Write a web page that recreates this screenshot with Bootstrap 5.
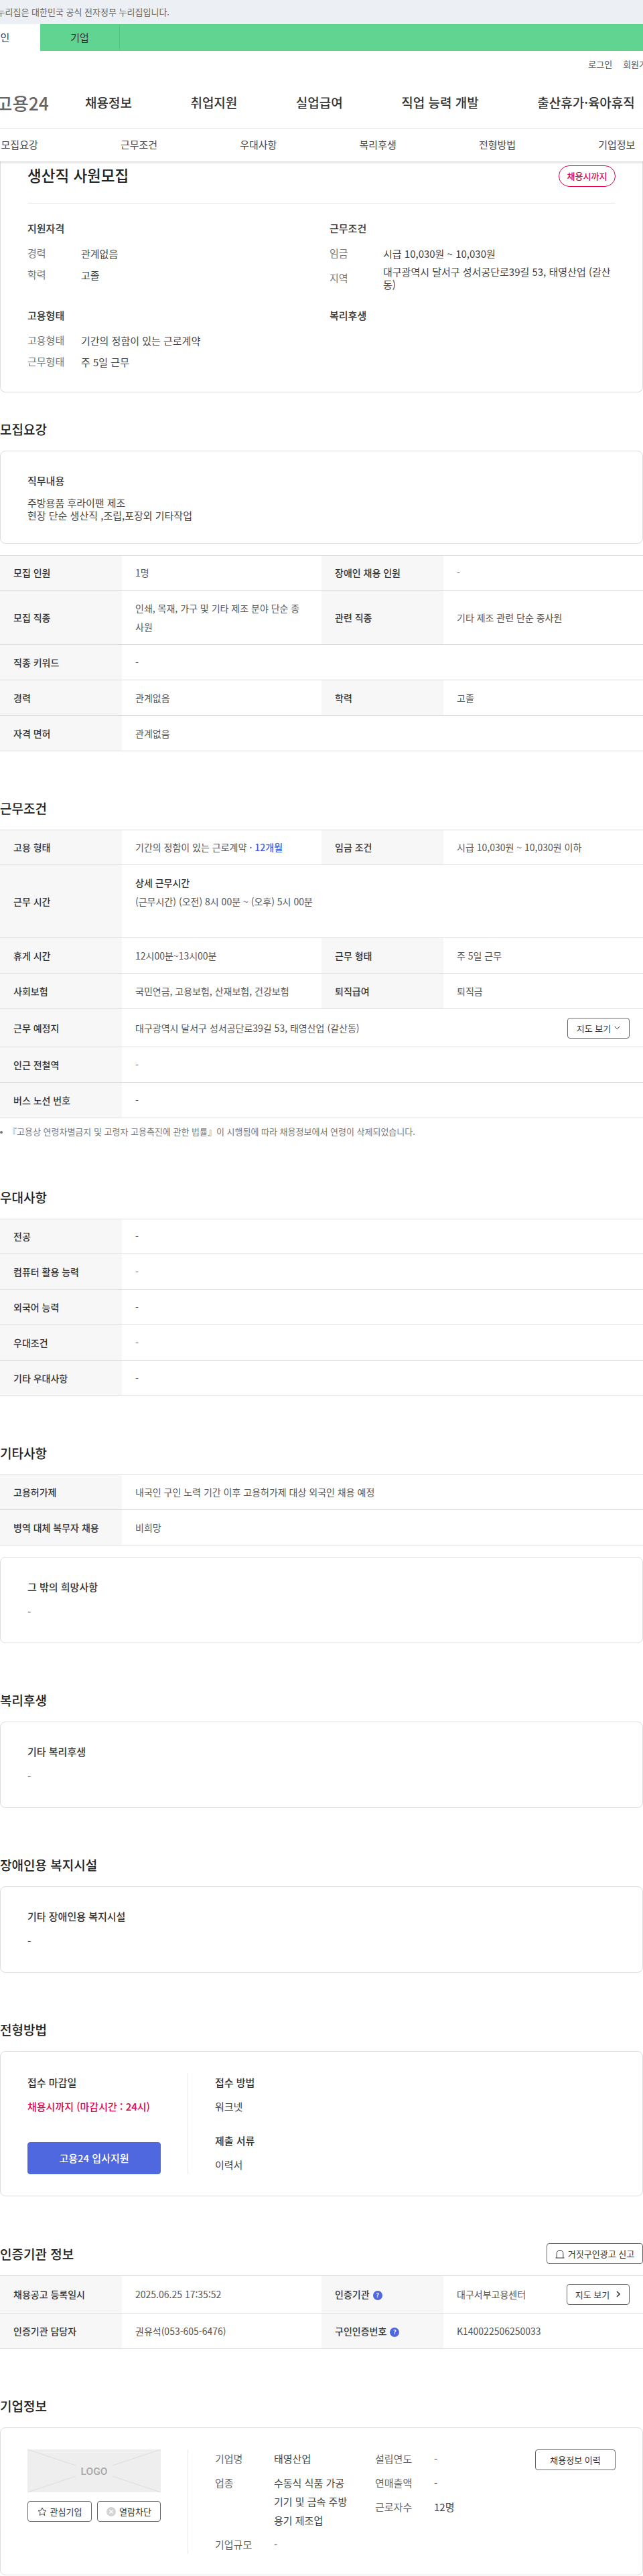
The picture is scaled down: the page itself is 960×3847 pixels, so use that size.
<!DOCTYPE html>
<html lang="ko">
<head>
<meta charset="utf-8">
<title>생산직 사원모집</title>
<link rel="stylesheet" href="https://cdn.jsdelivr.net/npm/bootstrap@5.3.0/dist/css/bootstrap.min.css">
<style>
body{font-family:"Noto Sans CJK KR","Noto Sans",sans-serif;font-size:15px;color:#444;background:#fff;overflow-x:hidden;margin:0}
.gov-strip{height:36px;background:#eceff4;font-size:13px;line-height:36px;color:#666;white-space:nowrap;overflow:hidden}
.gov-strip span{display:block;margin-left:-20px}
.role-strip{height:40px;background:#62d491;font-size:15px;line-height:40px;color:#333;overflow:hidden}
.role-item{width:119px;flex:none;text-align:center}
.role-item.on{background:#fff;margin-left:-59px}
.role-item.off{border-right:1px solid #57c785}
.util-links{height:40px;font-size:13px;color:#555;margin-right:-18px;gap:16px;white-space:nowrap}
.main-menu{height:76px;border-bottom:1px solid #e8e8e8;white-space:nowrap;overflow:hidden}
.brand-word{font-size:26.5px;font-weight:500;color:#666;margin-left:-6px;margin-right:54px}
.menu-word{font-size:19px;font-weight:500;color:#333;margin-right:87.5px}
.section-tabs{height:49px;position:relative;z-index:2;background:#fff;box-shadow:0 2px 3px rgba(0,0,0,.14);overflow:hidden}
.section-tabs-in{margin-left:-60px;width:1070px;height:48px}
.section-tabs-in span{flex:1 1 0;text-align:center;font-size:15px;color:#444}
.panel-box{--bs-card-border-color:#ddd;--bs-card-border-radius:8px;--bs-card-inner-border-radius:8px;--bs-card-spacer-x:40px;--bs-card-spacer-y:32px;--bs-card-color:#444}
.panel-top{border-top:0;border-top-left-radius:0;border-top-right-radius:0}
.panel-top .card-body{padding-top:6px;padding-bottom:31px}
.job-title{font-size:22.5px;font-weight:500;line-height:32px;color:#222;margin:-2px 0 0}
.deadline-pill{width:85px;height:32px;border:1px solid #e6004d;border-radius:16px;color:#e6004d;font-size:13px;font-weight:500}
.title-row{padding-bottom:24px;border-bottom:1px solid #e8e8e8;margin-bottom:25px}
.group-name{font-size:15px;font-weight:500;line-height:24px;color:#333;margin:0 0 11px}
.pair-row{display:flex;min-height:28px;align-items:center}
.pair-row dt{width:80px;flex:none;font-weight:400;color:#777}
.pair-row dd{margin:0;line-height:19px;flex:1;min-width:0}
.summary-list{margin:0;display:flex;flex-direction:column;gap:4px}
.group-gap{margin-top:25px}
.doc-section{margin-top:70px}
.doc-section.first-sec{margin-top:40px}
.sec-head{font-size:19px;font-weight:500;line-height:30px;color:#222;margin:0 0 17px}
.job-table{table-layout:fixed;margin:0;border-top:1px solid #ddd;--bs-table-border-color:#ddd;--bs-table-color:#555}
.job-table>tbody>tr>th,.job-table>tbody>tr>td{padding:12px 20px;font-size:14px;line-height:28px;vertical-align:middle;border-color:#ddd;color:#555}
.job-table>tbody>tr:first-child>th,.job-table>tbody>tr:first-child>td{padding-top:11px}
.job-table>tbody>tr>th{background:#f7f7f7;--bs-table-bg:#f7f7f7;font-weight:500;color:#333}
.col-head{width:182px}
.col-val{width:298px}
.strong-line{font-weight:500;color:#333}
.term-blue{color:#3f5fe0;font-weight:500}
.map-cell{min-height:32px}
.line-btn{--bs-btn-padding-x:0;--bs-btn-padding-y:0;--bs-btn-font-size:13px;--bs-btn-border-color:#666;--bs-btn-border-radius:4px;--bs-btn-color:#333;--bs-btn-line-height:1;height:31px;display:inline-flex;align-items:center;justify-content:center;gap:5px;white-space:nowrap;flex:none}
.btn-map{width:93px}
.btn-map.wide-gap{width:94px;gap:9px}
.btn-report{width:144px}
.btn-half{width:96px}
.btn-half.narrow{width:95px}
.btn-history{width:120px}
.age-note{font-size:13px;line-height:20px;color:#777;margin:10px 0 0;padding:0 0 3px 12px;position:relative;white-space:nowrap}
.age-note::before{content:"";position:absolute;left:0;top:9px;width:4px;height:4px;border-radius:50%;background:#777}
.gap-panel{margin-top:17px}
.panel-head{font-size:15px;font-weight:500;line-height:24px;color:#333;margin:0 0 11px}
.panel-text{line-height:19px;margin:0}
.panel-dash{line-height:28px;margin:0}
.split-left{width:199px;flex:none}
.split-right{margin-left:40px;padding-left:40px;border-left:1px solid #e8e8e8;flex:1 1 0;min-width:0}
.line-28{line-height:28px;margin:0}
.gap-8{margin-top:8px}
.gap-23{margin-top:23px}
.deadline-text{color:#e6004d;font-weight:500}
.apply-btn{--bs-btn-bg:#4f68e0;--bs-btn-border-color:#4f68e0;--bs-btn-color:#fff;--bs-btn-font-size:15px;--bs-btn-font-weight:500;--bs-btn-border-radius:4px;height:48px;display:flex;align-items:center;justify-content:center;width:100%;margin-top:auto}
.help-dot{width:14px;height:14px;border-radius:50%;background:#4f68e0;color:#fff;font-size:9px;font-weight:700;line-height:14px;text-align:center;display:inline-block;vertical-align:1px;margin-left:5px}
.logo-box{display:block;width:199px;height:64px}
.logo-word{font:500 15.5px Roboto,sans-serif;fill:#a8a8a8}
.btn-pair{margin-top:13px}
.corp-body{padding-bottom:31px}
.corp-pair{display:flex;line-height:28px}
.corp-pair dt{width:88px;flex:none;font-weight:400;color:#666}
.corp-pair dd{margin:0;width:122px;color:#444}
.corp-col{width:239px;flex:none}
.corp-col2{width:170px;flex:none}
.corp-pair+.corp-pair{margin-top:8px}
.corp-info{margin:0}
</style>
</head>
<body>
<div class="gov-strip"><span>이 누리집은 대한민국 공식 전자정부 누리집입니다.</span></div>
<div class="role-strip d-flex">
  <div class="role-item on">개인</div>
  <div class="role-item off">기업</div>
</div>
<header>
  <div class="util-links d-flex justify-content-end align-items-center"><span>로그인</span><span>회원가입</span></div>
  <nav class="main-menu d-flex align-items-center">
    <span class="brand-word">고용24</span>
    <span class="menu-word">채용정보</span>
    <span class="menu-word">취업지원</span>
    <span class="menu-word">실업급여</span>
    <span class="menu-word">직업 능력 개발</span>
    <span class="menu-word">출산휴가·육아휴직</span>
  </nav>
  <div class="section-tabs">
    <div class="section-tabs-in d-flex align-items-center">
      <span>모집요강</span><span>근무조건</span><span>우대사항</span><span>복리후생</span><span>전형방법</span><span>기업정보</span>
    </div>
  </div>
</header>
<main>
  <div class="card panel-box panel-top">
    <div class="card-body">
      <div class="title-row d-flex justify-content-between align-items-start">
        <h1 class="job-title">생산직 사원모집</h1>
        <span class="deadline-pill d-inline-flex align-items-center justify-content-center">채용시까지</span>
      </div>
      <div class="row gx-4">
        <div class="col-6">
          <h3 class="group-name">지원자격</h3>
          <dl class="summary-list">
            <div class="pair-row"><dt>경력</dt><dd>관계없음</dd></div>
            <div class="pair-row"><dt>학력</dt><dd>고졸</dd></div>
          </dl>
        </div>
        <div class="col-6">
          <h3 class="group-name">근무조건</h3>
          <dl class="summary-list">
            <div class="pair-row"><dt>임금</dt><dd>시급 10,030원 ~ 10,030원</dd></div>
            <div class="pair-row"><dt>지역</dt><dd>대구광역시 달서구 성서공단로39길 53, 태영산업 (갈산동)</dd></div>
          </dl>
        </div>
      </div>
      <div class="row gx-4 group-gap">
        <div class="col-6">
          <h3 class="group-name">고용형태</h3>
          <dl class="summary-list">
            <div class="pair-row"><dt>고용형태</dt><dd>기간의 정함이 있는 근로계약</dd></div>
            <div class="pair-row"><dt>근무형태</dt><dd>주 5일 근무</dd></div>
          </dl>
        </div>
        <div class="col-6">
          <h3 class="group-name">복리후생</h3>
        </div>
      </div>
    </div>
  </div>

  <section class="doc-section first-sec">
    <h2 class="sec-head">모집요강</h2>
    <div class="card panel-box">
      <div class="card-body">
        <h3 class="panel-head">직무내용</h3>
        <p class="panel-text">주방용품 후라이팬 제조<br>현장 단순 생산직 ,조립,포장외 기타작업</p>
      </div>
    </div>
    <div class="gap-panel">
      <table class="table job-table">
        <colgroup><col class="col-head"><col class="col-val"><col class="col-head"><col class="col-val"></colgroup>
        <tbody>
          <tr><th>모집 인원</th><td>1명</td><th>장애인 채용 인원</th><td>-</td></tr>
          <tr><th>모집 직종</th><td>인쇄, 목재, 가구 및 기타 제조 분야 단순 종사원</td><th>관련 직종</th><td>기타 제조 관련 단순 종사원</td></tr>
          <tr><th>직종 키워드</th><td colspan="3">-</td></tr>
          <tr><th>경력</th><td>관계없음</td><th>학력</th><td>고졸</td></tr>
          <tr><th>자격 면허</th><td colspan="3">관계없음</td></tr>
        </tbody>
      </table>
    </div>
  </section>

  <section class="doc-section">
    <h2 class="sec-head">근무조건</h2>
    <table class="table job-table">
      <colgroup><col class="col-head"><col class="col-val"><col class="col-head"><col class="col-val"></colgroup>
      <tbody>
        <tr><th>고용 형태</th><td>기간의 정함이 있는 근로계약 <span class="term-blue">· 12개월</span></td><th>임금 조건</th><td>시급 10,030원 ~ 10,030원 이하</td></tr>
        <tr><th>근무 시간</th><td colspan="3"><div class="strong-line">상세 근무시간</div><div>(근무시간) (오전) 8시 00분 ~ (오후) 5시 00분</div><div>&nbsp;</div></td></tr>
        <tr><th>휴게 시간</th><td>12시00분~13시00분</td><th>근무 형태</th><td>주 5일 근무</td></tr>
        <tr><th>사회보험</th><td>국민연금, 고용보험, 산재보험, 건강보험</td><th>퇴직급여</th><td>퇴직금</td></tr>
        <tr><th>근무 예정지</th><td colspan="3"><div class="map-cell d-flex justify-content-between align-items-center"><span>대구광역시 달서구 성서공단로39길 53, 태영산업 (갈산동)</span><button type="button" class="btn line-btn btn-map">지도 보기<svg width="9" height="6" viewBox="0 0 9 6" fill="none" stroke="#333" stroke-width="1"><path d="M.7.8 4.5 4.8 8.3.8"/></svg></button></div></td></tr>
        <tr><th>인근 전철역</th><td colspan="3">-</td></tr>
        <tr><th>버스 노선 번호</th><td colspan="3">-</td></tr>
      </tbody>
    </table>
    <p class="age-note">『고용상 연령차별금지 및 고령자 고용촉진에 관한 법률』이 시행됨에 따라 채용정보에서 연령이 삭제되었습니다.</p>
  </section>

  <section class="doc-section">
    <h2 class="sec-head">우대사항</h2>
    <table class="table job-table">
      <colgroup><col class="col-head"><col class="col-val"><col class="col-head"><col class="col-val"></colgroup>
      <tbody>
        <tr><th>전공</th><td colspan="3">-</td></tr>
        <tr><th>컴퓨터 활용 능력</th><td colspan="3">-</td></tr>
        <tr><th>외국어 능력</th><td colspan="3">-</td></tr>
        <tr><th>우대조건</th><td colspan="3">-</td></tr>
        <tr><th>기타 우대사항</th><td colspan="3">-</td></tr>
      </tbody>
    </table>
  </section>

  <section class="doc-section">
    <h2 class="sec-head">기타사항</h2>
    <table class="table job-table">
      <colgroup><col class="col-head"><col class="col-val"><col class="col-head"><col class="col-val"></colgroup>
      <tbody>
        <tr><th>고용허가제</th><td colspan="3">내국인 구인 노력 기간 이후 고용허가제 대상 외국인 채용 예정</td></tr>
        <tr><th>병역 대체 복무자 채용</th><td colspan="3">비희망</td></tr>
      </tbody>
    </table>
    <div class="card panel-box gap-panel">
      <div class="card-body">
        <h3 class="panel-head">그 밖의 희망사항</h3>
        <p class="panel-dash">-</p>
      </div>
    </div>
  </section>

  <section class="doc-section">
    <h2 class="sec-head">복리후생</h2>
    <div class="card panel-box">
      <div class="card-body">
        <h3 class="panel-head">기타 복리후생</h3>
        <p class="panel-dash">-</p>
      </div>
    </div>
  </section>

  <section class="doc-section">
    <h2 class="sec-head">장애인용 복지시설</h2>
    <div class="card panel-box">
      <div class="card-body">
        <h3 class="panel-head">기타 장애인용 복지시설</h3>
        <p class="panel-dash">-</p>
      </div>
    </div>
  </section>

  <section class="doc-section">
    <h2 class="sec-head">전형방법</h2>
    <div class="card panel-box">
      <div class="card-body d-flex">
        <div class="split-left d-flex flex-column">
          <p class="line-28 strong-line">접수 마감일</p>
          <p class="line-28 gap-8 deadline-text">채용시까지 (마감시간 : 24시)</p>
          <button type="button" class="btn apply-btn">고용24 입사지원</button>
        </div>
        <div class="split-right">
          <p class="line-28 strong-line">접수 방법</p>
          <p class="line-28 gap-8">워크넷</p>
          <p class="line-28 gap-23 strong-line">제출 서류</p>
          <p class="line-28 gap-8">이력서</p>
        </div>
      </div>
    </div>
  </section>

  <section class="doc-section">
    <div class="d-flex justify-content-between align-items-center sec-head">
      <h2 class="sec-head m-0">인증기관 정보</h2>
      <button type="button" class="btn line-btn btn-report"><svg width="14" height="14" viewBox="0 0 14 14" fill="none" stroke="#333" stroke-width="1"><path d="M.5 13h13M2.2 13V6.2a4.8 4.8 0 0 1 9.6 0V13"/></svg>거짓구인광고 신고</button>
    </div>
    <table class="table job-table">
      <colgroup><col class="col-head"><col class="col-val"><col class="col-head"><col class="col-val"></colgroup>
      <tbody>
        <tr><th>채용공고 등록일시</th><td>2025.06.25 17:35:52</td><th>인증기관<span class="help-dot">?</span></th><td><div class="map-cell d-flex justify-content-between align-items-center"><span>대구서부고용센터</span><button type="button" class="btn line-btn btn-map wide-gap">지도 보기<svg width="8" height="10" viewBox="0 0 8 10" fill="none" stroke="#333" stroke-width="1.6"><path d="M2 1l4 4-4 4"/></svg></button></div></td></tr>
        <tr><th>인증기관 담당자</th><td>권유석(053-605-6476)</td><th>구인인증번호<span class="help-dot">?</span></th><td>K140022506250033</td></tr>
      </tbody>
    </table>
  </section>

  <section class="doc-section">
    <h2 class="sec-head">기업정보</h2>
    <div class="card panel-box">
      <div class="card-body corp-body d-flex">
        <div class="split-left">
          <svg class="logo-box" viewBox="0 0 199 64" role="img" aria-label="LOGO">
            <rect width="199" height="64" fill="#eee"/>
            <path d="M0 0 72 24M199 0 127 24M0 64 72 40M199 64 127 40" stroke="#ddd" stroke-width="1" fill="none"/>
            <text class="logo-word" x="99.5" y="37.5" text-anchor="middle">LOGO</text>
          </svg>
          <div class="btn-pair d-flex justify-content-between">
            <button type="button" class="btn line-btn btn-half"><svg width="14" height="14" viewBox="0 0 14 14" fill="none" stroke="#444" stroke-width="1"><path d="M7 1l1.8 3.9 4.2.5-3.1 2.9.8 4.2L7 10.4 3.3 12.5l.8-4.2L1 5.4l4.2-.5z"/></svg>관심기업</button>
            <button type="button" class="btn line-btn btn-half narrow"><svg width="14" height="14" viewBox="0 0 14 14"><circle cx="7" cy="7" r="7" fill="#d4d4d4"/><path d="M4.5 4.5l5 5M9.5 4.5l-5 5" stroke="#fff" stroke-width="1.4"/></svg>열람차단</button>
          </div>
        </div>
        <div class="split-right d-flex">
          <dl class="corp-info corp-col">
            <div class="corp-pair"><dt>기업명</dt><dd>태영산업</dd></div>
            <div class="corp-pair"><dt>업종</dt><dd>수동식 식품 가공 기기 및 금속 주방용기 제조업</dd></div>
            <div class="corp-pair"><dt>기업규모</dt><dd>-</dd></div>
          </dl>
          <dl class="corp-info corp-col2">
            <div class="corp-pair"><dt>설립연도</dt><dd>-</dd></div>
            <div class="corp-pair"><dt>연매출액</dt><dd>-</dd></div>
            <div class="corp-pair"><dt>근로자수</dt><dd>12명</dd></div>
          </dl>
          <div class="ms-auto"><button type="button" class="btn line-btn btn-history">채용정보 이력</button></div>
        </div>
      </div>
    </div>
  </section>
</main>
<script src="https://cdn.jsdelivr.net/npm/bootstrap@5.3.0/dist/js/bootstrap.bundle.min.js"></script>
</body>
</html>
